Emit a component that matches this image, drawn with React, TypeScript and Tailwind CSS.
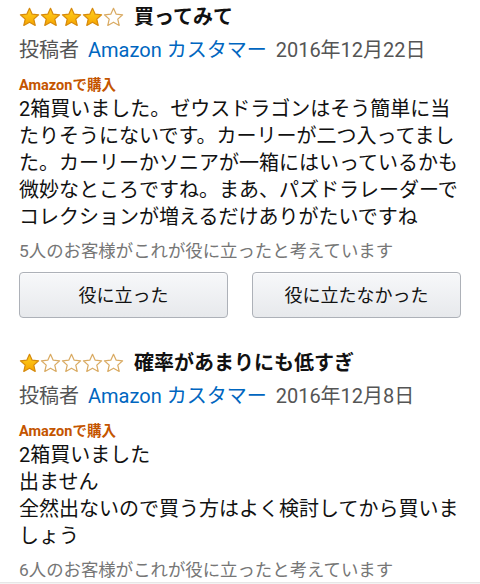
import React from "react"

const FONT = "font-['Roboto','Noto_Sans_CJK_JP',sans-serif]"

function Star({ filled }: { filled: boolean }) {
  return (
    <svg width="21" height="21" viewBox="0 0 24 24" className="shrink-0">
      <defs>
        <linearGradient id="starFill" x1="0" y1="0" x2="0" y2="1">
          <stop offset="0%" stopColor="#ffd21f" />
          <stop offset="100%" stopColor="#f7a500" />
        </linearGradient>
      </defs>
      <path
        d="M12 1.5l3.1 6.7 7.3.75-5.5 4.9 1.6 7.2L12 17.4l-6.5 3.65 1.6-7.2-5.5-4.9 7.3-.75z"
        fill={filled ? "url(#starFill)" : "#ffffff"}
        stroke={filled ? "#d68a0c" : "#d9aa62"}
        strokeWidth="1.4"
        strokeLinejoin="round"
      />
    </svg>
  )
}

interface Review {
  stars: number
  title: string
  date: string
  body: string[]
  helpful: number
  buttons?: boolean
}

const reviews: Review[] = [
  {
    stars: 4,
    title: "買ってみて",
    date: "2016年12月22日",
    body: [
      "2箱買いました。ゼウスドラゴンはそう簡単に当たりそうにないです。カーリーが二つ入ってました。カーリーかソニアが一箱にはいっているかも微妙なところですね。まあ、パズドラレーダーでコレクションが増えるだけありがたいですね",
    ],
    helpful: 5,
    buttons: true,
  },
  {
    stars: 1,
    title: "確率があまりにも低すぎ",
    date: "2016年12月8日",
    body: ["2箱買いました", "出ません", "全然出ないので買う方はよく検討してから買いましょう"],
    helpful: 6,
  },
]

function ReviewBlock({ r }: { r: Review }) {
  return (
    <div className="flex flex-col">
      <div className="flex h-[34px] items-center">
        <div className="flex items-center">
          {[0, 1, 2, 3, 4].map((i) => (
            <Star key={i} filled={i < r.stars} />
          ))}
        </div>
        <span className="ml-[10px] text-[20px] font-bold text-[#111]">{r.title}</span>
      </div>
      <div className="flex h-[32px] items-center text-[20px] text-[#555]">
        <span>投稿者</span>
        <span className="ml-[9px] text-[#0066c0]">Amazon カスタマー</span>
        <span className="ml-[9px]">{r.date}</span>
      </div>
      <div className="mt-[10px] h-[20px] text-[14.5px] leading-[20px] font-bold text-[#c45500]">Amazonで購入</div>
      <div className="text-[20px] leading-[27px] text-[#111]">
        {r.body.map((line, i) => (
          <p key={i}>{line}</p>
        ))}
      </div>
      <div className="mt-[8px] text-[17.4px] leading-[24px] text-[#767676]">
        {r.helpful}人のお客様がこれが役に立ったと考えています
      </div>
      {r.buttons && (
        <div className="mt-[9px] flex gap-[24px]">
          {["役に立った", "役に立たなかった"].map((b) => (
            <button
              key={b}
              className="flex h-[46px] flex-1 items-center justify-center rounded-[4px] border border-[#adb1b8] bg-gradient-to-b from-[#f7f8fa] to-[#e7e9ec] text-[18px] text-[#111] shadow-[inset_0_1px_0_rgba(255,255,255,0.6)]"
            >
              {b}
            </button>
          ))}
        </div>
      )}
    </div>
  )
}

export default function App() {
  return (
    <div className={`${FONT} h-[584px] w-[480px] overflow-hidden bg-white`}>
      <div className="px-[19px]">
        <ReviewBlock r={reviews[0]} />
        <div className="mt-[28px]">
          <ReviewBlock r={reviews[1]} />
        </div>
      </div>
      <div className="h-[10px] border-t border-[#e7e7e7] bg-[#f3f3f3]" />
    </div>
  )
}
